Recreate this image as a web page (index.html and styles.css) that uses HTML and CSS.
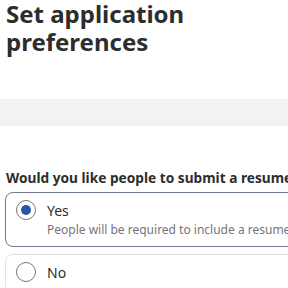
FILE: index.html
```html
<!DOCTYPE html>
<html lang="en">
<head>
  <meta charset="UTF-8">
  <title>Set application preferences</title>
  <link rel="stylesheet" href="styles.css">
</head>
<body>
  <h1 class="page-title">Set application preferences</h1>
  <div class="divider-band"></div>

  <div class="question" role="radiogroup">
    <div class="question-label">Would you like people to submit a resume?</div>

    <label class="option selected">
      <span class="radio"><span class="radio-dot"></span></span>
      <span class="option-text">
        <span class="option-title">Yes</span>
        <span class="option-desc">People will be required to include a resume</span>
      </span>
    </label>

    <label class="option">
      <span class="radio"></span>
      <span class="option-text">
        <span class="option-title">No</span>
      </span>
    </label>
  </div>
</body>
</html>
```

FILE: styles.css
```css
body {
  margin: 0;
  font-family: "Noto Sans", "Open Sans", sans-serif;
  color: #2d2d2d;
  background-color: #fff;
  overflow: hidden;
}

.page-title {
  margin: 0;
  padding: 0 6px;
  font-size: 24px;
  line-height: 28px;
  font-weight: 700;
  width: 220px;
}

.divider-band {
  margin-top: 43px;
  height: 26px;
  background-color: #f3f2f1;
  border-top: 1px solid #efeeed;
}

.question {
  padding-left: 5px;
  margin-top: 42px;
}

.question-label {
  padding-left: 1px;
  font-size: 13.7px;
  font-weight: 700;
  line-height: 20px;
  white-space: nowrap;
  margin-bottom: 4px;
}

.option {
  display: flex;
  align-items: flex-start;
  gap: 11px;
  width: 320px;
  box-sizing: border-box;
  padding: 7px 10px 9px;
  border: 1px solid #e4e2e0;
  border-radius: 8px;
  margin-bottom: 7px;
}

.option.selected {
  border-color: #6f7b8c;
}

.radio {
  flex: none;
  width: 20px;
  height: 20px;
  box-sizing: border-box;
  border: 1px solid #767676;
  border-radius: 50%;
  display: flex;
  align-items: center;
  justify-content: center;
  margin-top: 0;
}

.radio-dot {
  width: 10px;
  height: 10px;
  border-radius: 50%;
  background-color: #2557a7;
}

.option-text {
  display: flex;
  flex-direction: column;
}

.option-title {
  font-size: 14px;
  line-height: 22px;
}

.option-desc {
  font-size: 12px;
  line-height: 15px;
  color: #767676;
  white-space: nowrap;
}
```
